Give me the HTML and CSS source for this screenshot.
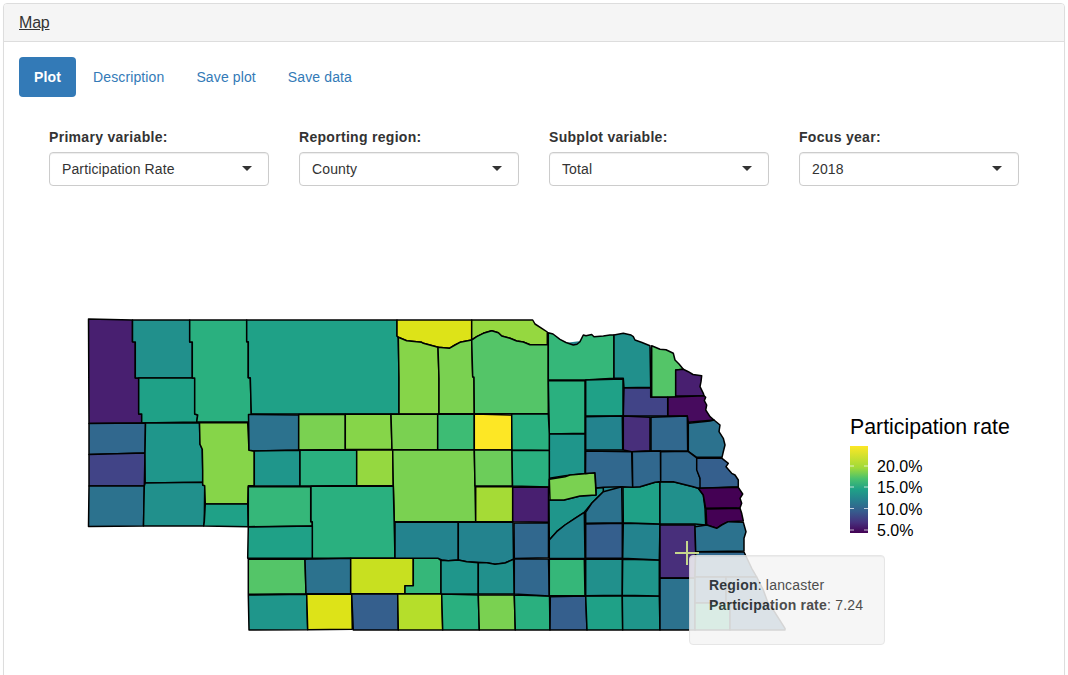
FILE: index.html
```html
<!DOCTYPE html>
<html lang="en">
<head>
  <meta charset="UTF-8">
  <title>Map</title>
  <link rel="stylesheet" href="styles.css">
</head>
<body>

<div class="panel">
  <div class="panel-heading"><a class="panel-title" href="#">Map</a></div>
  <div class="panel-body">

    <ul class="pills">
      <li class="active"><a href="#">Plot</a></li>
      <li><a href="#">Description</a></li>
      <li><a href="#">Save plot</a></li>
      <li><a href="#">Save data</a></li>
    </ul>

    <div class="controls">
      <div class="control">
        <label>Primary variable:</label>
        <div class="select">Participation Rate<span class="caret"></span></div>
      </div>
      <div class="control">
        <label>Reporting region:</label>
        <div class="select">County<span class="caret"></span></div>
      </div>
      <div class="control">
        <label>Subplot variable:</label>
        <div class="select">Total<span class="caret"></span></div>
      </div>
      <div class="control">
        <label>Focus year:</label>
        <div class="select">2018<span class="caret"></span></div>
      </div>
    </div>

    <div class="plot">
      <svg class="map" viewBox="4 200 1060 475" width="1060" height="475">
        <defs>
          <linearGradient id="viridis" x1="0" y1="1" x2="0" y2="0">
            <stop offset="0" stop-color="#440154"/>
            <stop offset="0.125" stop-color="#46327e"/>
            <stop offset="0.25" stop-color="#365c8d"/>
            <stop offset="0.375" stop-color="#277f8e"/>
            <stop offset="0.5" stop-color="#1fa187"/>
            <stop offset="0.625" stop-color="#4ac16d"/>
            <stop offset="0.75" stop-color="#a0da39"/>
            <stop offset="1" stop-color="#fde725"/>
          </linearGradient>
        </defs>

        <!-- fills the slivers between the eastern counties -->
        <polygon class="backing" points="548,345 614,337 650,347 675,371 700,388 705,410 690,424 719,426 722,452 721,459 737,481 737,510 743,550 660,629 551,629"/>

        <g class="counties">
          <!-- panhandle -->
          <polygon class="v03" points="88.5,319 132.5,320 132.5,341.7 135.3,342 135.3,378 138.7,378 138.7,414 141.7,414 141.7,423 89,423.5"/>
          <polygon class="v10" points="132.5,320 189.7,320 189.7,342 192.3,342 192.3,378 135.3,378 135.3,342 132.5,341.7"/>
          <polygon class="v12" points="138.7,378 194.7,378 194.7,414 197.7,415 196.7,422 141.7,423 141.7,414 138.7,414"/>
          <polygon class="v13" points="189.7,320 246.7,320 246.7,341.7 248.3,341.7 248.3,377.7 250.3,377.7 251.3,414 252,422 196.7,422 197.7,415 194.7,414 194.7,378 192.3,378 192.3,342 189.7,342"/>
          <polygon class="v12" points="246.7,320 397,320 397,336 398.3,337.3 399,377.7 399,414 251.3,414 250.3,377.7 248.3,377.7 248.3,341.7 246.7,341.7"/>
          <polygon class="v07" points="89,423.5 145.5,423 145,453 89,454.5"/>
          <polygon class="v05" points="89,454.5 145,453 144.3,486 89,486"/>
          <polygon class="v08" points="89,486 144.3,486 143.5,526 88.5,526.5"/>
          <polygon class="v11" points="145.5,423 199.5,422.7 200,444.3 202.3,449.3 202.7,470 202.7,482.3 145.2,483 145,453"/>
          <polygon class="v10" points="145.2,483 202.7,482.3 202.7,485 204.7,485.7 204.3,521.7 203.7,526 143.5,526 144.3,486"/>
          <polygon class="v19" points="199.5,422.7 247.7,422.7 249,450 254.3,451 254.3,485.7 248.3,485.7 247.7,504 205.3,504 204.7,485.7 202.7,485 202.7,470 202.3,449.3 200,444.3"/>
          <polygon class="v12" points="205.3,504 247.7,504 248.3,526.7 203.7,526 204.3,521.7"/>

          <!-- north -->
          <polygon class="v24" points="397,320 471.7,320 471.7,340 460,342.3 455,345 449.3,348.3 438.3,347.3 423.3,343.3 421.7,342.3 406.7,340.7 398.3,337.3 397,336"/>
          <polygon class="v20" points="471.7,320 532.7,320 535,324 543.3,329.3 547.3,332 547.3,344.7 530,344.7 523.3,342 516.7,341 510,338.3 501.7,336 498.3,332.7 491.7,330.7 483.3,333.3 476.7,336.7 471.7,340"/>
          <polygon class="v19" points="398.3,337.3 406.7,340.7 421.7,342.3 423.3,343.3 438,347.3 439,378.3 439,413.7 399,414 399,377.7"/>
          <polygon class="v18" points="438,347.3 449.3,348.3 455,345 460,342.3 471.7,340 472.7,376.7 474,377.3 474.3,413.7 439,413.7 439,378.3"/>
          <polygon class="v16" points="471.7,340 476.7,336.7 483.3,333.3 491.7,330.7 498.3,332.7 501.7,336 510,338.3 516.7,341 523.3,342 530,344.7 548.3,344.7 548.3,413.7 474.3,413.7 474,377.3 472.7,376.7"/>
          <polygon class="v14" points="548.3,332.7 553,334 560,339.3 566,342.5 573.3,345 577,344.3 580,341.7 583.3,335 586,335.8 591.7,334.5 594,336.7 603.3,336 610,335 614,335 614,378.3 585,380 548.3,380"/>
          <polygon class="v10" points="614,335 623.3,333.3 631,335 633.3,336.7 635,340 642,342.5 650,345.7 650.7,387.3 624,387.7 623.3,378.3 614,378.3"/>
          <polygon class="v16" points="651.7,345.7 660,349.3 666,349.8 673.3,353.3 675,360 679,364 683.3,369.3 675.7,370 675.7,397.3 651.7,397.3"/>
          <polygon class="v03" points="675.7,370 683.3,369.3 688.3,371.7 693,374.5 701.7,375.7 701,381.7 700,386.7 703.3,393.3 704,395.7 675.7,396"/>
          <polygon class="v02" points="667.7,397.3 704,395.7 705.7,397.3 704.3,400.7 706.7,405 705.7,410 710,416.7 714,420 688.3,422.3 687.3,416 667.7,416"/>
          <polygon class="v05" points="624,388 650.7,388 650.7,397.3 667.7,397.3 667.7,416 623.3,415.7"/>
          <polygon class="v12" points="585.7,380 623,379 623,415.7 585.7,416"/>
          <polygon class="v13" points="548.3,380.7 585,380.7 585,433.3 549.3,434"/>
          <polygon class="v11" points="549.3,434 585,434 585,473.5 565,475.7 549.3,478.3"/>

          <!-- sandhills rows -->
          <polygon class="v08" points="248.5,414.5 298.7,415 298.7,450 254.3,451 249,450.3"/>
          <polygon class="v18" points="298.7,414.5 345.3,414.3 345.3,449.5 298.7,450"/>
          <polygon class="v19" points="345.3,414.3 391,414.3 392,449.5 345.3,449.5"/>
          <polygon class="v18" points="391,414.3 437.7,414.3 437.7,450 392,449.5"/>
          <polygon class="v15" points="437.7,414.3 474.3,414 474.3,450 437.7,450"/>
          <polygon class="v25" points="474.3,414 511.7,415 512,450 474.3,450"/>
          <polygon class="v13" points="511.7,414 548.3,414 549.3,434 549.3,450.5 512,450"/>
          <polygon class="v11" points="254.3,451 300,450.3 300,486 254.3,485.7"/>
          <polygon class="v13" points="300,450.3 356.7,450 356.7,485.5 311.7,486 300,486"/>
          <polygon class="v20" points="356.7,450 392.7,449.7 393.3,485.7 356.7,485.5"/>
          <polygon class="v18" points="392.7,449.7 474.3,450 475,486 475.7,521.7 394.3,521.7 393.3,485.7"/>
          <polygon class="v17" points="474.3,450 512,450 512.5,486 475,486"/>
          <polygon class="v13" points="512,450.5 549.3,450.5 549.3,478.3 549,487 512.5,486"/>
          <polygon class="v21" points="475.7,486.7 512.7,486.7 512.7,521.7 475.7,521.7"/>
          <polygon class="v03" points="512.7,487 548.5,487.3 548.5,522.3 512.7,521.7"/>

          <!-- southwest -->
          <polygon class="v14" points="248.3,486.7 310.7,486.7 310.7,521.7 312.3,521.7 312.3,526 248.3,526.7"/>
          <polygon class="v13" points="311,486.3 393.3,486 395,558.3 312.3,558.3 312.3,526 312.3,521.7 311,521.7"/>
          <polygon class="v12" points="248.3,527 312.3,526 312.3,558.3 247.7,558.3"/>
          <polygon class="v16" points="248.3,559.3 305,559.3 306,593.7 248.3,594.3"/>
          <polygon class="v08" points="305,559.3 350.7,558.3 350.7,593.5 306,593.7"/>
          <polygon class="v23" points="350.7,558.3 413.3,558.3 413.3,585.7 405,585.7 405,593.7 350.7,593.7"/>
          <polygon class="v14" points="413.3,558.3 438.3,558.3 441,560.7 441,593.7 405,593.7 405,585.7 413.3,585.7"/>
          <polygon class="v11" points="248.3,595 306.7,594.3 307.7,629.7 249,630"/>
          <polygon class="v24" points="306.7,594.3 351.7,594 352.3,629.3 307.7,629.7"/>
          <polygon class="v06" points="351.7,594 397.7,594 398.3,630 353.3,630"/>
          <polygon class="v22" points="397.7,594 441.7,594 442.7,630 398.3,630"/>
          <polygon class="v13" points="441.7,594 478.3,595 479.3,630 442.7,630"/>
          <polygon class="v18" points="478.3,595 514.3,595 515.3,630 479.3,630"/>
          <polygon class="v13" points="514.3,595 549.5,596 550,630 515.3,630"/>

          <!-- platte valley -->
          <polygon class="v09" points="395,522.3 458.3,522.3 458.3,560 448.3,560.7 441.7,560 438.3,558.3 395,558.3"/>
          <polygon class="v09" points="458.3,522.3 513,522.3 513.5,559.3 505,563 495,564.3 486.7,562.7 466.7,561.7 458.3,560"/>
          <polygon class="v07" points="514,523 548.5,523 548.5,557.7 514.3,558.5"/>
          <polygon class="v11" points="441,560.3 448.3,560.7 458.3,560 466.7,561.7 478.3,562.7 478.3,594 441,593.7"/>
          <polygon class="v10" points="478.3,562.7 486.7,562.7 495,564.3 505,563 513.5,559.3 514.3,594 478.3,594"/>
          <polygon class="v07" points="514.3,559 548.5,559 549.3,596 514.3,594"/>

          <!-- east central -->
          <polygon class="v11" points="549,500 564,500 580,496 596,495 596,488 603.3,487.5 603.3,491.7 591.7,503.3 584.3,512.3 575,518.3 565,525 556.7,531.7 549.3,540"/>
          <polygon class="v18" points="549.3,479.3 565,476.7 570,475 581.7,474 595,472.7 596,495 580,496 564,500 550,500"/>
          <polygon class="v09" points="549.3,540 556.7,531.7 565,525 575,518.3 584.3,512.3 585,558.5 549.3,558.3"/>
          <polygon class="v14" points="549.3,559.3 584.3,559.3 585,595.7 549.3,595.7"/>
          <polygon class="v06" points="550.3,596.7 585.7,596 587,630 550,630"/>
          <polygon class="v12" points="585.7,596 622.3,596 622.7,630 587,630"/>
          <polygon class="v11" points="622.3,596 659.3,596 660,630 622.7,630"/>
          <polygon class="v10" points="585.7,559.3 622.3,559.3 622.3,595.3 585.7,595.7"/>
          <polygon class="v11" points="622.7,559.3 659.3,560 659.3,596 622.3,595.3"/>
          <polygon class="v06" points="585.7,524 622.3,523.3 622.3,558.3 585.7,558.3"/>
          <polygon class="v09" points="623.3,523.3 660,524 659.3,560 622.7,558.3"/>
          <polygon class="v08" points="585.7,512.3 591.7,503.3 603.3,491.7 621.7,486.7 622.3,522.7 585.7,523.3"/>
          <polygon class="v12" points="623,487 640,486.7 655,482.3 660,482 660,524 623.3,522.7"/>
          <polygon class="v10" points="660,482 673.3,481.7 693.3,486.7 698.3,488.3 703.3,495 705,508.3 705.7,525 695,524 660,524"/>
          <polygon class="v09" points="585.7,416.7 622.3,416 622.7,450 585.7,450"/>
          <polygon class="v04" points="623.3,416 650,417.3 650,450.7 631.7,451.7 623.3,450"/>
          <polygon class="v07" points="651,417.3 687.3,416 687.7,451.3 651,450.7"/>
          <polygon class="v08" points="688.3,423.3 710,421 714,420 720,425 719,431.7 723.3,438.3 725,445 723.3,451.7 722,457.3 696.7,457.3 688.3,451.3"/>
          <polygon class="v07" points="585.7,451 631.7,451.7 632.7,487.3 621.7,486.7 603.3,487.3 596,488 595,472.7 585.5,473.5"/>
          <polygon class="v07" points="632.3,451.7 660.5,451 660.7,481.5 655,482.3 640,486.7 632.7,487.3"/>
          <polygon class="v07" points="660.7,451.7 688,451.3 696.7,458 698.3,473.3 700,478.3 705.7,487.3 698.3,488.3 693.3,486.7 673.3,481.7 660.7,481.5"/>
          <polygon class="v06" points="696.7,458.3 722,458.3 728.3,463.3 726,466.7 731.7,473.3 735,475 738.3,480 738.3,486.7 700,488.3 700,478.3 696.7,470"/>
          <polygon class="v01" points="698.3,488.3 738.3,487.3 742.7,494 740,498.3 741.7,503.3 740,507.7 705.7,508.3 703.3,495"/>
          <polygon class="v01" points="706,509 740,508.3 741.7,513.3 743.3,521 728.3,521.7 721.7,525 716.7,528.3 706.7,525"/>
          <polygon class="v04" points="660,525 695,525 695.7,551.7 695,578 660,578"/>
          <polygon class="v08" points="695,526.7 706.7,525 716.7,528.3 721.7,525 728.3,521.7 743.3,522.3 746,531.7 744,538.3 744,551 695.7,551.7"/>

          <!-- southeast corner, mostly under the tooltip -->
          <polygon class="v08" points="660,578.3 695,578 695,630 660,630"/>
          <polygon class="v07" points="695.7,552 744,552 751.7,568.3 756.7,577 695,577"/>
          <polygon class="v07" points="695,577 726,577 726,603 695,603"/>
          <polygon class="v07" points="726,577 756.7,577 763.3,590 768,603 726,603"/>
          <polygon class="v13" points="695,603 730,603 730,630 695,630"/>
          <polygon class="v07" points="730,603 768,603 773.3,610 785,628.3 785,630 730,630"/>
        </g>

        <text class="legend-title" x="850" y="434">Participation rate</text>
        <rect x="850" y="446" width="18" height="87" fill="url(#viridis)"/>
        <g class="ticks">
          <path d="M850 466h4M864 466h4M850 487h4M864 487h4M850 508.5h4M864 508.5h4M850 530h4M864 530h4"/>
        </g>
        <text class="legend-label" x="877" y="472">20.0%</text>
        <text class="legend-label" x="877" y="493">15.0%</text>
        <text class="legend-label" x="877" y="515">10.0%</text>
        <text class="legend-label" x="877" y="536">5.0%</text>
      </svg>

      <div class="tip">
        <b>Region</b>: lancaster<br>
        <b>Participation rate</b>: 7.24
      </div>
      <div class="cross-h"></div>
      <div class="cross-v"></div>
    </div>

  </div>
</div>

</body>
</html>
```

FILE: styles.css
```css
html, body {
  height: 675px;
  overflow: hidden;
}
body {
  margin: 0;
  padding: 3px 3px 0;
  box-sizing: border-box;
  background-color: #fff;
  color: #333;
  font-family: "Liberation Sans", Arial, sans-serif;
  font-size: 14px;
  line-height: 20px;
}
.panel {
  border: 1px solid #ddd;
  border-radius: 4px;
  height: 720px;
  box-shadow: 0 1px 1px rgba(0, 0, 0, .05);
}
.panel-heading {
  height: 38px;
  padding: 9px 15px 0;
  box-sizing: border-box;
  background-color: #f5f5f5;
  border-bottom: 1px solid #ddd;
  border-radius: 3px 3px 0 0;
}
.panel-title {
  color: #333;
  font-size: 16px;
  line-height: 20px;
  letter-spacing: -.2px;
  text-decoration: underline;
}

.pills {
  display: flex;
  gap: 2px;
  list-style: none;
  margin: 15px 0 0 15px;
  padding: 0;
}
.pills a {
  display: block;
  padding: 10px 15px;
  border-radius: 4px;
  color: #337ab7;
  letter-spacing: .12px;
  text-decoration: none;
}
.pills .active a {
  background-color: #337ab7;
  color: #fff;
  font-weight: bold;
  letter-spacing: .15px;
}

.controls {
  display: flex;
  gap: 30px;
  margin: 30px 0 0 45px;
}
.control {
  width: 220px;
}
.control label {
  display: block;
  font-weight: bold;
  letter-spacing: .3px;
  margin-bottom: 5px;
}
.select {
  position: relative;
  height: 34px;
  box-sizing: border-box;
  padding: 6px 12px;
  background-color: #fff;
  border: 1px solid #ccc;
  border-radius: 4px;
  box-shadow: inset 0 1px 1px rgba(0, 0, 0, .075);
  letter-spacing: .12px;
}
.caret {
  position: absolute;
  right: 16px;
  top: 13px;
  border-top: 5px solid #333;
  border-left: 5.5px solid transparent;
  border-right: 5.5px solid transparent;
}

.plot {
  position: relative;
  margin-top: 14px;
}
.map {
  display: block;
}
.backing {
  fill: #23838e;
}
.counties polygon {
  stroke: #000;
  stroke-width: 1.5;
  stroke-linejoin: round;
}
.ticks path {
  stroke: #fff;
  stroke-opacity: .7;
  stroke-width: 1;
}
.legend-title {
  font-size: 21.3px;
  fill: #000;
}
.legend-label {
  font-size: 16px;
  fill: #000;
}

.tip {
  position: absolute;
  left: 685px;
  top: 355px;
  width: 196px;
  height: 90px;
  box-sizing: border-box;
  padding: 19px;
  background-color: #f5f5f5;
  border: 1px solid #e3e3e3;
  border-radius: 4px;
  box-shadow: inset 0 1px 1px rgba(0, 0, 0, .05);
  letter-spacing: .2px;
  opacity: .87;
}
.cross-h {
  position: absolute;
  left: 671px;
  top: 352px;
  width: 24px;
  height: 1.5px;
  background-color: #c5d78c;
}
.cross-v {
  position: absolute;
  left: 682px;
  top: 341px;
  width: 1.5px;
  height: 24px;
  background-color: #c5d78c;
}

.v01 { fill: #440154; }
.v02 { fill: #470b5e; }
.v03 { fill: #481f70; }
.v04 { fill: #482f7b; }
.v05 { fill: #414487; }
.v06 { fill: #355f8d; }
.v07 { fill: #31688e; }
.v08 { fill: #2c728e; }
.v09 { fill: #23838e; }
.v10 { fill: #21908c; }
.v11 { fill: #1f968b; }
.v12 { fill: #1fa187; }
.v13 { fill: #2ab07f; }
.v14 { fill: #35b779; }
.v15 { fill: #3dbc74; }
.v16 { fill: #54c568; }
.v17 { fill: #6ccd5a; }
.v18 { fill: #7ad151; }
.v19 { fill: #86d549; }
.v20 { fill: #95d840; }
.v21 { fill: #a5db36; }
.v22 { fill: #b5de2b; }
.v23 { fill: #c8e020; }
.v24 { fill: #dde318; }
.v25 { fill: #fde725; }
```
